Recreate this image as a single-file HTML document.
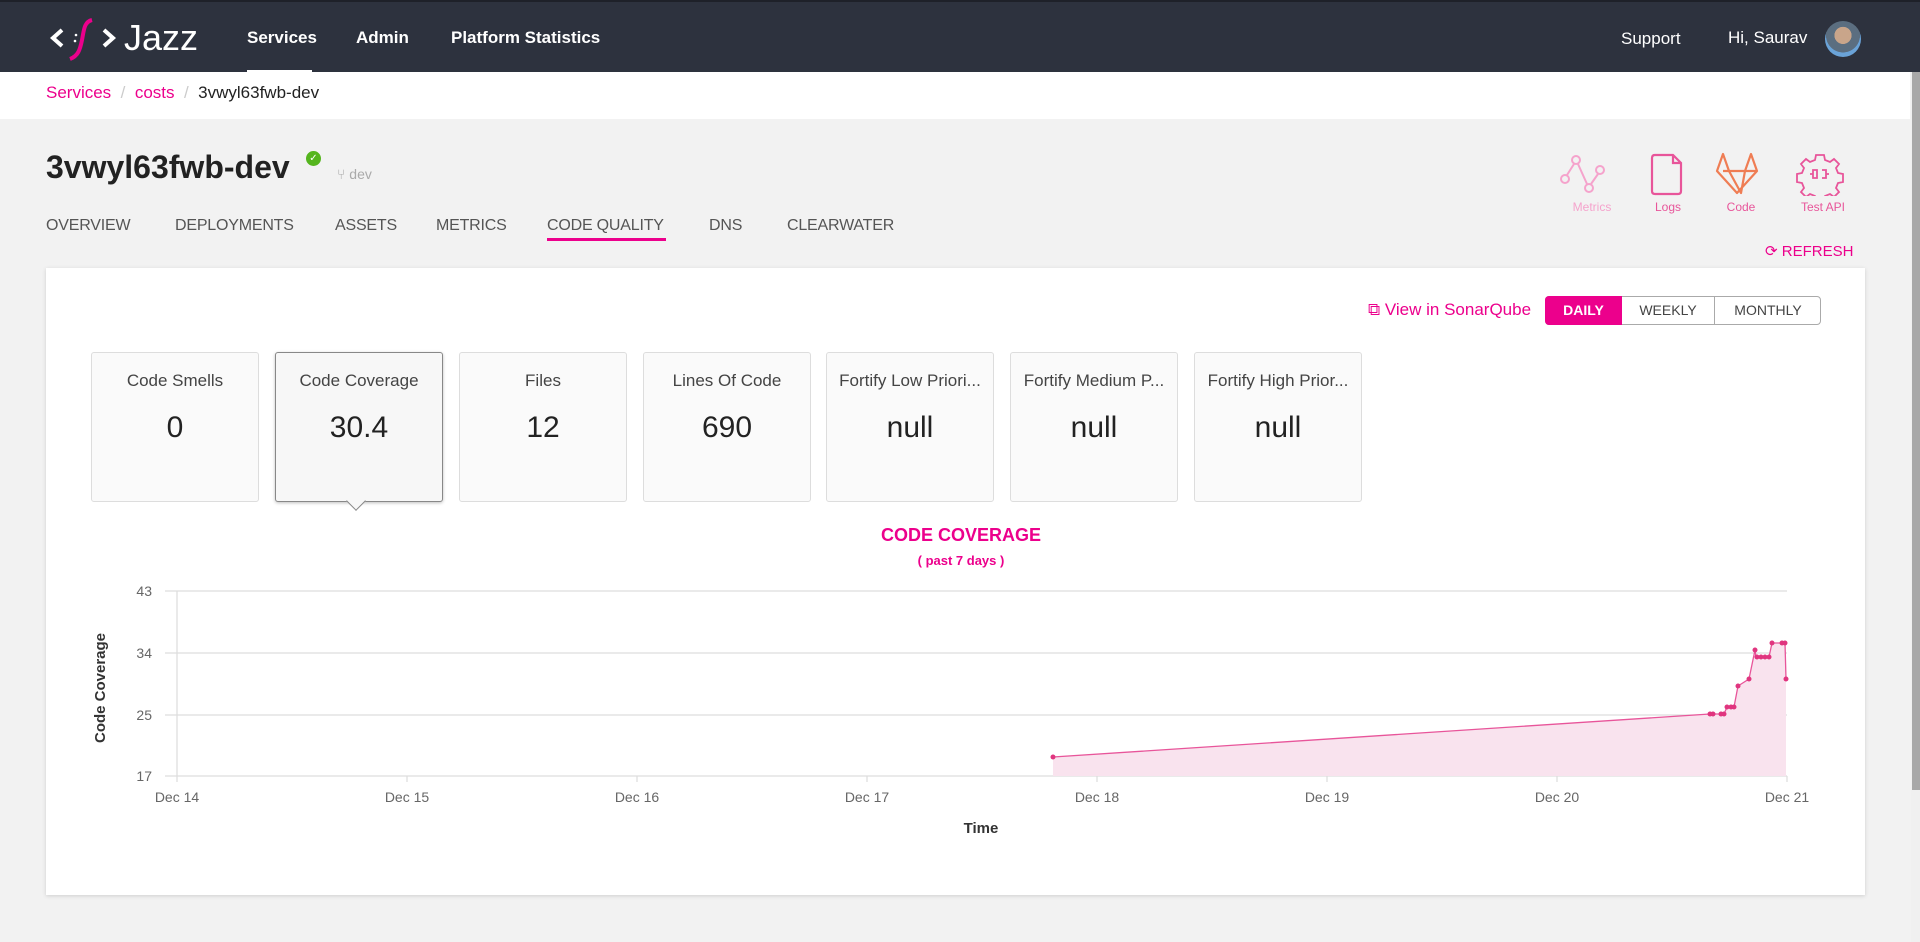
<!DOCTYPE html>
<html><head><meta charset="utf-8">
<style>
*{margin:0;padding:0;box-sizing:border-box}
body{width:1920px;height:942px;overflow:hidden;background:#f2f2f2;font-family:"Liberation Sans",sans-serif;position:relative}
.abs{position:absolute;white-space:nowrap}
.nav{position:absolute;left:0;top:0;width:1920px;height:72px;background:#2d323e;border-top:2px solid #1e2129}
.nav .l{position:absolute;top:26px;color:#fff;font-size:17px;font-weight:bold}
.crumb{position:absolute;left:0;top:72px;width:1910px;height:47px;background:#fff}
.pink{color:#ec008c}
.tab{position:absolute;top:217px;font-size:16px;color:#555;letter-spacing:-0.2px}
.card{position:absolute;left:46px;top:268px;width:1819px;height:627px;background:#fff;box-shadow:0 1px 4px rgba(0,0,0,.15)}
.box{position:absolute;top:352px;width:168px;height:150px;background:#fafafa;border:1px solid #ddd;border-radius:3px;text-align:center}
.box .t{margin-top:18px;font-size:17px;color:#444;overflow:hidden;text-overflow:ellipsis;padding:0 6px}
.box .v{margin-top:20px;font-size:30px;color:#222}
.ic{position:absolute;top:200px;font-size:12px;text-align:center;width:80px}
</style></head><body>
<div class="nav">
 <svg class="abs" style="left:48px;top:14px" width="70" height="46" viewBox="0 0 70 46">
  <path d="M14 14 L5 22 L14 30" stroke="#fff" stroke-width="4" fill="none"/>
  <path d="M56 14 L65 22 L56 30" stroke="#fff" stroke-width="4" fill="none"/>
  <path d="M44 4 C36 6 36 14 34 24 C32 34 30 40 22 43" stroke="#ec008c" stroke-width="4" fill="none"/>
  <circle cx="28" cy="19" r="1.3" fill="#fff"/><circle cx="27" cy="25" r="1.3" fill="#fff"/>
 </svg>
 <div class="abs" style="left:124px;top:15px;color:#fff;font-size:36px">Jazz</div>
 <div class="l" style="left:247px">Services</div>
 <div class="abs" style="left:247px;top:68px;width:65px;height:4px;background:#fff"></div>
 <div class="l" style="left:356px">Admin</div>
 <div class="l" style="left:451px">Platform Statistics</div>
 <div class="l" style="left:1621px;font-weight:normal;top:27px">Support</div>
 <div class="l" style="left:1728px;font-weight:normal;top:26px">Hi, Saurav</div>
 <div class="abs" style="left:1825px;top:19px;width:36px;height:36px;border-radius:50%;background:radial-gradient(circle at 50% 40%,#c9a58a 0 30%,#5b6e80 31% 60%,#6aa3d8 61%)"></div>
</div>
<div class="crumb">
 <div class="abs" style="left:46px;top:11px;font-size:17px"><span class="pink">Services</span> <span style="color:#ccc">&nbsp;/&nbsp;</span> <span class="pink">costs</span> <span style="color:#ccc">&nbsp;/&nbsp;</span> <span style="color:#222">3vwyl63fwb-dev</span></div>
</div>
<div class="abs" style="left:1911px;top:72px;width:9px;height:870px;background:#f0f0f0"></div>
<div class="abs" style="left:1912px;top:72px;width:8px;height:718px;background:#a8a8a8"></div>
<div class="abs" style="left:46px;top:149px;font-size:32px;font-weight:bold;color:#222">3vwyl63fwb-dev</div>
<div class="abs" style="left:306px;top:151px;width:15px;height:15px;border-radius:50%;background:#55b51e;color:#fff;font-size:10px;text-align:center;line-height:15px">✓</div>
<div class="abs" style="left:337px;top:166px;font-size:14px;color:#aaa">⑂ dev</div>
<div class="tab" style="left:46px">OVERVIEW</div>
<div class="tab" style="left:175px">DEPLOYMENTS</div>
<div class="tab" style="left:335px">ASSETS</div>
<div class="tab" style="left:436px">METRICS</div>
<div class="tab pink" style="left:547px">CODE QUALITY</div>
<div class="abs" style="left:547px;top:238px;width:119px;height:3px;background:#ec008c"></div>
<div class="tab" style="left:709px">DNS</div>
<div class="tab" style="left:787px">CLEARWATER</div>
<svg class="abs" style="left:1560px;top:150px" width="300" height="46" viewBox="0 0 300 46">
 <g stroke="#f5a3cc" stroke-width="2" fill="none"><circle cx="16" cy="10" r="4"/><circle cx="5" cy="29" r="4"/><circle cx="29" cy="38" r="4"/><circle cx="40" cy="20" r="4"/><path d="M14 14 L7 25 M18 14 L27 34 M31 34 L38 24"/></g>
 <path d="M95 5 h18 l8 8 v28 q0 3 -3 3 h-23 q-3 0 -3 -3 v-33 q0 -3 3 -3z M113 5 v8 h8" stroke="#e8559a" stroke-width="2.2" fill="none"/>
 <path d="M163 4 l6 17 h16 l6 -17 l6 17 l-20 22 l-20 -22z M163 21 h34 M169 21 l12 22 l4 -22" stroke="#ef7d54" stroke-width="2.2" fill="none" stroke-linejoin="round"/>
 <path d="M256 5 h8 l1 5 l5 2 l4 -3 l5 5 l-3 4 l2 5 l5 1 v8 l-5 1 l-2 5 l3 4 l-5 5 l-4 -3 l-5 2 l-1 5 h-8 l-1 -5 l-5 -2 l-4 3 l-5 -5 l3 -4 l-2 -5 l-5 -1 v-8 l5 -1 l2 -5 l-3 -4 l5 -5 l4 3 l5 -2z M250 24 h3 v-4 h4 v8 h-4 v-4 M262 20 h4 v8 h-4 M266 24 h3" stroke="#e8559a" stroke-width="1.8" fill="none"/>
</svg>
<div class="ic" style="left:1552px;color:#f5a3cc">Metrics</div>
<div class="ic" style="left:1628px;color:#e8559a">Logs</div>
<div class="ic" style="left:1701px;color:#e8559a">Code</div>
<div class="ic" style="left:1783px;color:#e8559a">Test API</div>
<div class="abs pink" style="left:1765px;top:242px;font-size:15px">⟳ REFRESH</div>
<div class="card"></div>
<div class="abs pink" style="left:1368px;top:300px;font-size:17px">⧉ View in SonarQube</div>
<div class="abs" style="left:1545px;top:296px;width:276px;height:29px;border:1px solid #aaa;border-radius:4px;background:#fff;font-size:14px;color:#444">
 <div class="abs" style="left:-1px;top:-1px;width:77px;height:29px;background:#ec008c;color:#fff;border-radius:4px 0 0 4px;text-align:center;line-height:29px;font-weight:bold">DAILY</div>
 <div class="abs" style="left:76px;top:0;width:93px;height:27px;border-right:1px solid #aaa;text-align:center;line-height:27px">WEEKLY</div>
 <div class="abs" style="left:169px;top:0;width:106px;height:27px;text-align:center;line-height:27px">MONTHLY</div>
</div>
<div class="box" style="left:91px"><div class="t">Code Smells</div><div class="v">0</div></div>
<div class="box" style="left:275px;border-color:#888;background:#f7f7f7;box-shadow:0 1px 3px rgba(0,0,0,.25)"><div class="t">Code Coverage</div><div class="v">30.4</div></div>
<div class="abs" style="left:349px;top:494px;width:14px;height:14px;background:#f7f7f7;border-right:1px solid #888;border-bottom:1px solid #888;transform:rotate(45deg)"></div>
<div class="box" style="left:459px"><div class="t">Files</div><div class="v">12</div></div>
<div class="box" style="left:643px"><div class="t">Lines Of Code</div><div class="v">690</div></div>
<div class="box" style="left:826px"><div class="t">Fortify Low Priori...</div><div class="v">null</div></div>
<div class="box" style="left:1010px"><div class="t">Fortify Medium P...</div><div class="v">null</div></div>
<div class="box" style="left:1194px"><div class="t">Fortify High Prior...</div><div class="v">null</div></div>
<div class="abs pink" style="left:0;width:1922px;text-align:center;top:525px;font-size:18px;font-weight:bold">CODE COVERAGE</div>
<div class="abs pink" style="left:0;width:1922px;text-align:center;top:553px;font-size:13px;font-weight:bold">( past 7 days )</div>
<svg class="abs" style="left:0;top:0" width="1920" height="942">
 <g stroke="#ddd" stroke-width="1.2">
  <path d="M165 591 H1787 M165 653 H1787 M165 715 H1787 M165 776 H1787 M177 591 V782"/>
  <path d="M407 776 V782 M637 776 V782 M867 776 V782 M1097 776 V782 M1327 776 V782 M1557 776 V782 M1787 776 V782"/>
 </g>
 <g font-family="Liberation Sans" font-size="14" fill="#666" text-anchor="end">
  <text x="152" y="596">43</text><text x="152" y="658">34</text><text x="152" y="720">25</text><text x="152" y="781">17</text>
 </g>
 <g font-family="Liberation Sans" font-size="14" fill="#666" text-anchor="middle">
  <text x="177" y="802">Dec 14</text><text x="407" y="802">Dec 15</text><text x="637" y="802">Dec 16</text><text x="867" y="802">Dec 17</text><text x="1097" y="802">Dec 18</text><text x="1327" y="802">Dec 19</text><text x="1557" y="802">Dec 20</text><text x="1787" y="802">Dec 21</text>
 </g>
 <text x="981" y="833" font-family="Liberation Sans" font-size="15" font-weight="bold" fill="#333" text-anchor="middle">Time</text>
 <text transform="translate(105,688) rotate(-90)" font-family="Liberation Sans" font-size="15" font-weight="bold" fill="#333" text-anchor="middle">Code Coverage</text>
 <path d="M1053 757 L1710 714 L1724 714 L1727 707 L1734 707 L1738 686 L1749 679 L1755 650 L1756 657 L1769 657 L1772 643 L1785 643 L1786 679 L1786 776 L1053 776Z" fill="#f9e3ee"/>
 <path d="M1053 757 L1710 714 L1724 714 L1727 707 L1734 707 L1738 686 L1749 679 L1755 650 L1756 657 L1769 657 L1772 643 L1785 643 L1786 679" fill="none" stroke="#e8559a" stroke-width="1.3"/>
 <g fill="#e0357f">
  <circle cx="1053" cy="757" r="2.5"/><circle cx="1710" cy="714" r="2.5"/><circle cx="1713" cy="714" r="2.5"/><circle cx="1721" cy="714" r="2.5"/><circle cx="1724" cy="714" r="2.5"/><circle cx="1727" cy="707" r="2.5"/><circle cx="1731" cy="707" r="2.5"/><circle cx="1734" cy="707" r="2.5"/><circle cx="1738" cy="686" r="2.5"/><circle cx="1749" cy="679" r="2.5"/><circle cx="1755" cy="650" r="2.5"/><circle cx="1757" cy="657" r="2.5"/><circle cx="1761" cy="657" r="2.5"/><circle cx="1765" cy="657" r="2.5"/><circle cx="1769" cy="657" r="2.5"/><circle cx="1772" cy="643" r="2.5"/><circle cx="1782" cy="643" r="2.5"/><circle cx="1785" cy="643" r="2.5"/><circle cx="1786" cy="679" r="2.5"/>
 </g>
</svg>
</body></html>
